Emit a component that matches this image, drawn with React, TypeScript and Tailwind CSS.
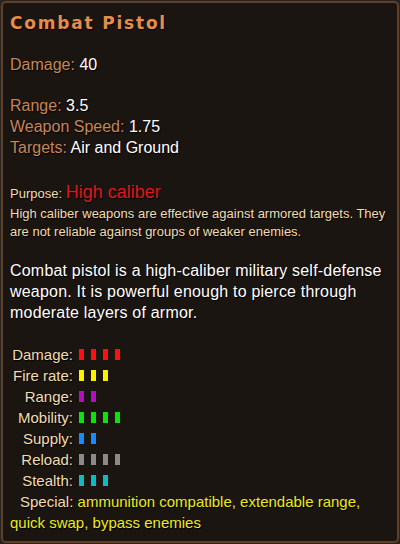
const STATS = [
  { label: 'Damage:', count: 4, color: 'bg-[#ff1010]' },
  { label: 'Fire rate:', count: 3, color: 'bg-[#fff000]' },
  { label: 'Range:', count: 2, color: 'bg-[#b010c0]' },
  { label: 'Mobility:', count: 4, color: 'bg-[#10e010]' },
  { label: 'Supply:', count: 2, color: 'bg-[#1a88ff]' },
  { label: 'Reload:', count: 4, color: 'bg-[#8a8a8a]' },
  { label: 'Stealth:', count: 3, color: 'bg-[#10b8c0]' },
];

function Bars({ count, color }: { count: number; color: string }) {
  return (
    <span className="inline-flex gap-[7px] ml-[6px] align-middle">
      {Array.from({ length: count }).map((_, i) => (
        <span key={i} className={`w-[5px] h-[11px] ${color}`} />
      ))}
    </span>
  );
}

export default function App() {
  return (
    <div className="w-[400px] h-[544px] bg-[#2a2420] p-[1px] font-['Liberation_Sans',sans-serif] [text-shadow:1px_1px_1px_#000]">
      <div className="h-full rounded-[5px] border-2 border-[#5e4029] bg-[#1b1511] pl-[7px] pr-[4px] pt-[8px]">
        <h1 className="font-['DejaVu_Sans',sans-serif] font-bold text-[17px] leading-[24px] tracking-[1.8px] text-[#e48e4c]">
          Combat Pistol
        </h1>

        <div className="mt-[19px] text-[16px] leading-[21px]">
          <div><span className="text-[#c5855a]">Damage:</span> <span className="text-white">40</span></div>
          <div className="mt-[20px]"><span className="text-[#c5855a]">Range:</span> <span className="text-white">3.5</span></div>
          <div><span className="text-[#c5855a]">Weapon Speed:</span> <span className="text-white">1.75</span></div>
          <div><span className="text-[#c5855a]">Targets:</span> <span className="text-white">Air and Ground</span></div>
        </div>

        <div className="mt-[23px] leading-[22px]">
          <span className="text-[13px] text-[#f0dcb0]">Purpose: </span>
          <span className="text-[18px] text-[#e01818]">High caliber</span>
        </div>
        <p className="text-[13px] leading-[18px] text-[#f0dcb0]">
          High caliber weapons are effective against armored targets. They are not reliable against groups of weaker enemies.
        </p>

        <p className="mt-[19px] text-[16px] leading-[21px] tracking-[0.2px] text-white">
          Combat pistol is a high-caliber military self-defense weapon. It is powerful enough to pierce through moderate layers of armor.
        </p>

        <div className="mt-[21px] text-[15px] leading-[21px] text-[#f0dcb0]">
          {STATS.map((s) => (
            <div key={s.label} className="flex items-center">
              <span className="w-[63px] text-right">{s.label}</span>
              <Bars count={s.count} color={s.color} />
            </div>
          ))}
          <p className="indent-[10px]">
            Special: <span className="text-[#eaea20]">ammunition compatible, extendable range, quick swap, bypass enemies</span>
          </p>
        </div>
      </div>
    </div>
  );
}
